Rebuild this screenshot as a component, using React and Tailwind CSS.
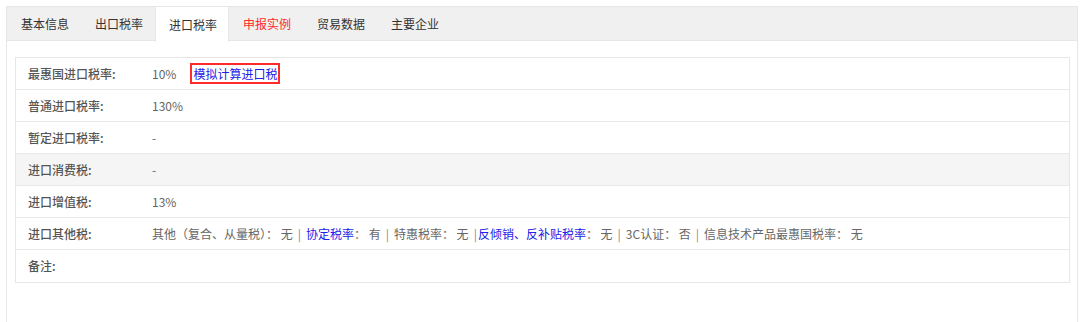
import React from "react";

const font = { fontFamily: '"Noto Sans CJK SC", "Microsoft YaHei", sans-serif' };

const tabs = [
  { t: "基本信息" },
  { t: "出口税率" },
  { t: "进口税率", active: true },
  { t: "申报实例", red: true },
  { t: "贸易数据" },
  { t: "主要企业" },
];

function Row({ label, children, gray, last }) {
  return (
    <div
      className={`flex h-[32px] items-center ${last ? "" : "border-b border-[#e8e8e8]"} ${gray ? "bg-[#f5f5f5]" : "bg-white"}`}
    >
      <div className="w-[136px] shrink-0 pl-[12px] text-[12px] font-medium text-[#555]">{label}</div>
      <div className="flex items-center text-[12px] text-[#666]">{children}</div>
    </div>
  );
}

const Sep = () => <span className="mx-[5px] text-[#888]">|</span>;

export default function App() {
  return (
    <div className="h-[322px] w-[1080px] overflow-hidden bg-white pl-[6px] pr-[2px] pt-[6px]" style={font}>
      <div className="h-[330px] border border-[#e6e6e6]">
        <div className="flex h-[34px] border-b border-[#e6e6e6] bg-[#f0f0f0]">
          {tabs.map((tab) => (
            <div
              key={tab.t}
              className={`flex h-[34px] w-[74px] items-center justify-center pl-[2px] text-[12px] ${
                tab.active ? "-mb-px h-[35px] border-x border-[#e6e6e6] bg-white text-[#333]" : tab.red ? "text-[#ff2a2a]" : "text-[#333]"
              }`}
            >
              {tab.t}
            </div>
          ))}
        </div>
        <div className="pl-[8px] pr-[7px] pt-[16px]">
          <div className="border border-[#e6e6e6]">
            <Row label="最惠国进口税率:">
              <span>10%</span>
              <span className="ml-[14px] border-2 border-[#ff2a2a] px-[1px] leading-[17px] text-[#2020e8]">模拟计算进口税</span>
            </Row>
            <Row label="普通进口税率:">130%</Row>
            <Row label="暂定进口税率:">-</Row>
            <Row label="进口消费税:" gray>-</Row>
            <Row label="进口增值税:">13%</Row>
            <Row label="进口其他税:">
              <span className="whitespace-pre">
                其他（复合、从量税）： 无<Sep /><span className="text-[#2020e8]">协定税率</span>： 有<Sep />特惠税率： 无<Sep /><span className="-ml-[4px] text-[#2020e8]">反倾销、反补贴税率</span>： 无<Sep />3C认证： 否<Sep />信息技术产品最惠国税率： 无
              </span>
            </Row>
            <Row label="备注:" last></Row>
          </div>
        </div>
      </div>
    </div>
  );
}
